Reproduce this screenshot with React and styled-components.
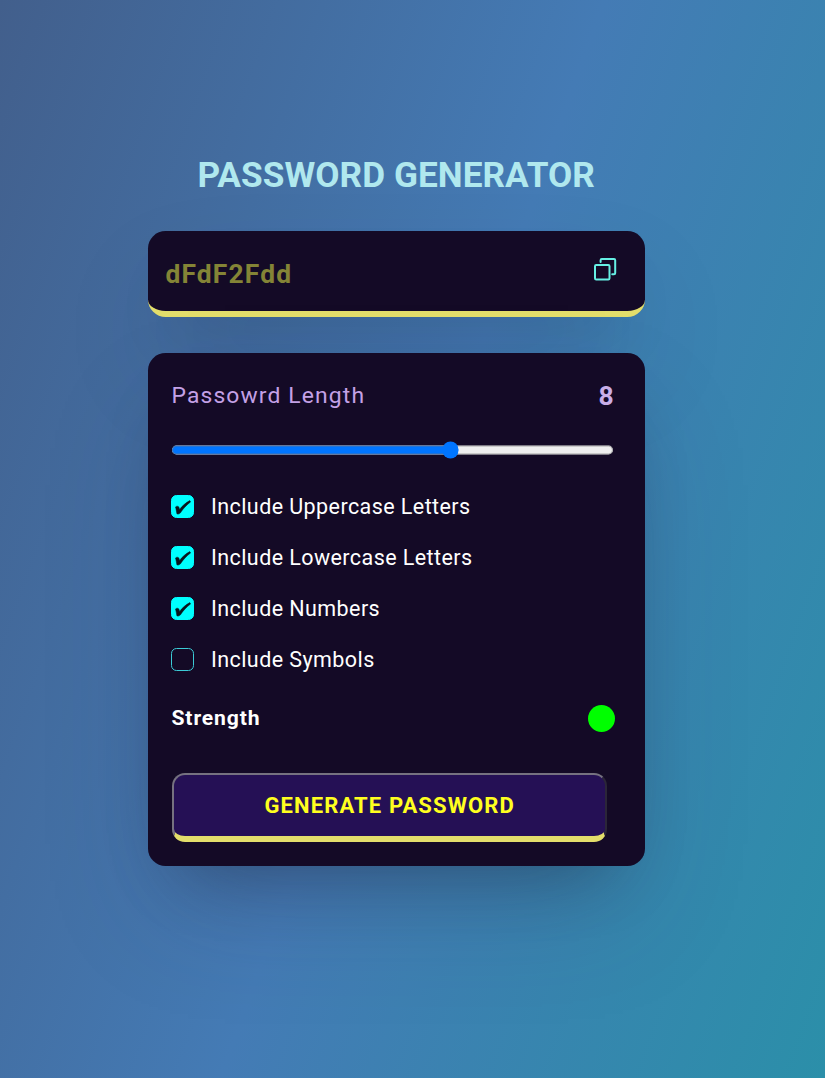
import React, { useState } from "react";
import styled, { createGlobalStyle, css } from "styled-components";

const GlobalStyle = createGlobalStyle`
  * { box-sizing: border-box; margin: 0; padding: 0; }
  body { font-family: Roboto, sans-serif; }
`;

const cardSurface = css`
  background: #140a26;
  border-radius: 17.6px;
  box-shadow:
    rgba(50, 50, 93, 0.25) 0 55px 110px -22px,
    rgba(0, 0, 0, 0.3) 0 33px 66px -33px;
`;

const Page = styled.main`
  min-height: 100vh;
  padding-left: 147.7px;
  padding-top: 155px;
  background: linear-gradient(109.6deg, #425f8c 0%, #447bb5 50%, #2b8fa9 100%);
`;

const Container = styled.div`
  width: 497px;
  display: flex;
  flex-direction: column;
`;

const Title = styled.h1`
  height: 41px;
  line-height: 41px;
  font-size: 35.2px;
  letter-spacing: 0.05px;
  font-weight: 700;
  text-align: center;
  text-transform: uppercase;
  color: #b0e8ee;
`;

const Display = styled.section`
  ${cardSurface}
  margin-top: 35px;
  height: 86px;
  padding: 0 26.6px 0 17.8px;
  display: flex;
  align-items: center;
  justify-content: space-between;
  border-bottom: 6px solid #e3de6b;
`;

const Password = styled.output`
  padding-top: 5px;
  font-size: 26.4px;
  font-weight: 700;
  letter-spacing: 1.15px;
  color: #848436;
`;

const CopyButton = styled.button`
  width: 26px;
  height: 26px;
  margin-bottom: 4px;
  border: 0;
  background: none;
  color: #66f0e4;
  svg { display: block; }
`;

const Panel = styled.section`
  ${cardSurface}
  margin-top: 35.6px;
  height: 513.4px;
  padding: 24px 30px 24px 23.8px;
  display: flex;
  flex-direction: column;
`;

const Row = styled.div`
  display: flex;
  flex-shrink: 0;
  align-items: center;
  justify-content: space-between;
  height: ${(p) => p.$height}px;
`;

const LengthLabel = styled.label`
  font-size: 22.88px;
  letter-spacing: 1.13px;
  color: #c4a1e6;
`;

const LengthValue = styled.span`
  margin-right: 1px;
  font-size: 26.4px;
  font-weight: 700;
  color: #c9aee8;
`;

const Slider = styled.input`
  zoom: 1.1;
  flex-shrink: 0;
  width: 402px;
  height: 16px;
  margin-top: 24.4px;
  accent-color: #0075ff;
`;

const Options = styled.div`
  margin-top: 22.2px;
  display: flex;
  flex-direction: column;
`;

const Option = styled.label`
  display: flex;
  align-items: center;
  gap: 17px;
  height: 51px;
  font-size: 21.5px;
  letter-spacing: 0.42px;
  color: #fff;
`;

const Check = styled.input`
  appearance: none;
  width: 22.5px;
  height: 22.5px;
  display: grid;
  place-items: center;
  border: 1.1px solid #3ccbd6;
  border-radius: 5.5px;
  &:checked {
    background: #00ffff;
    border-color: #00ffff;
  }
`;

const CheckWrap = styled.span`
  display: grid;
  place-items: center;
  > * { grid-area: 1 / 1; }
  svg { pointer-events: none; }
`;

const StrengthLabel = styled.span`
  padding-bottom: 2px;
  font-size: 21.12px;
  font-weight: 700;
  letter-spacing: 0.88px;
  color: #fff;
`;

const Indicator = styled.span`
  width: 27px;
  height: 27px;
  border-radius: 50%;
  background: #00ff00;
`;

const Generate = styled.button`
  flex-shrink: 0;
  width: 435.5px;
  height: 69px;
  margin-left: 0.5px;
  margin-top: 21.6px;
  font: 700 22px Roboto, sans-serif;
  letter-spacing: 1.13px;
  text-transform: uppercase;
  color: #ffff1f;
  background: #251055;
  border: 2.2px solid;
  border-color: #767280 #2b2638 #e3de6b #767280;
  border-bottom-width: 6px;
  border-radius: 13px;
`;

const choices = [
  ["Include Uppercase Letters", true],
  ["Include Lowercase Letters", true],
  ["Include Numbers", true],
  ["Include Symbols", false],
];

function Choice({ label, initial }) {
  const [on, setOn] = useState(initial);
  return (
    <Option>
      <CheckWrap>
        <Check type="checkbox" checked={on} onChange={() => setOn(!on)} />
        {on && (
          <svg width="22" height="22" viewBox="0 0 22 22" fill="#07141c" stroke="#07141c" strokeWidth="0.5">
            <path d="M3.5 11C4.3 10 6.1 9.9 6.8 10.9L7.6 13.4C10.2 10 13.6 6.8 17.8 4.6L18.6 5.9C14.8 8.8 11 12.7 8.3 17C7.1 18 5.8 18.4 4.9 17.8C4.3 15.6 4.3 13.1 3.5 11Z" />
          </svg>
        )}
      </CheckWrap>
      {label}
    </Option>
  );
}

export default function App() {
  const [length, setLength] = useState(8);
  return (
    <Page>
      <GlobalStyle />
      <Container>
        <Title>Password Generator</Title>
        <Display>
          <Password>dFdF2Fdd</Password>
          <CopyButton aria-label="Copy">
            <svg width="26" height="26" viewBox="0 0 26 26" fill="none" stroke="currentColor" strokeWidth="2" strokeLinecap="round" strokeLinejoin="round">
              <rect x="3" y="9" width="14.5" height="14.5" rx="1.2" />
              <path d="M8.6 6V4.2A1.2 1.2 0 0 1 9.8 3H22a1.2 1.2 0 0 1 1.2 1.2V17a1.2 1.2 0 0 1-1.2 1.2h-1.8" />
            </svg>
          </CopyButton>
        </Display>
        <Panel>
          <Row $height={38}>
            <LengthLabel>Passowrd Length</LengthLabel>
            <LengthValue>{length}</LengthValue>
          </Row>
          <Slider type="range" min="1" max="12" value={length} onChange={(e) => setLength(Number(e.target.value))} />
          <Options>
            {choices.map(([label, checked]) => (
              <Choice key={label} label={label} initial={checked} />
            ))}
          </Options>
          <Row $height={66}>
            <StrengthLabel>Strength</StrengthLabel>
            <Indicator />
          </Row>
          <Generate>Generate Password</Generate>
        </Panel>
      </Container>
    </Page>
  );
}
